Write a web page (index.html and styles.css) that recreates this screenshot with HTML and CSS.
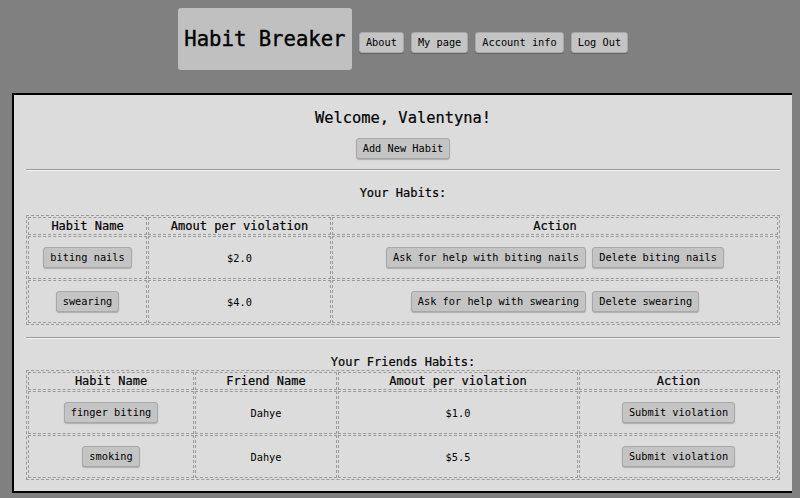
FILE: index.html
```html
<!DOCTYPE html>
<html lang="en">
<head>
<meta charset="utf-8">
<title>Habit Breaker</title>
<link rel="stylesheet" href="styles.css">
</head>
<body>
<header class="top">
  <div class="brand">Habit Breaker</div>
  <nav class="nav">
    <button class="btn">About</button>
    <button class="btn">My page</button>
    <button class="btn">Account info</button>
    <button class="btn">Log Out</button>
  </nav>
</header>
<main class="panel">
  <h2 class="welcome">Welcome, Valentyna!</h2>
  <div class="center"><button class="btn">Add New Habit</button></div>
  <hr class="rule rule-1">
  <h3 class="sect sect-1">Your Habits:</h3>
  <table class="grid">
    <thead>
      <tr><th class="w-119">Habit Name</th><th class="w-183">Amout per violation</th><th>Action</th></tr>
    </thead>
    <tbody>
      <tr>
        <td><button class="btn">biting nails</button></td>
        <td>$2.0</td>
        <td><button class="btn">Ask for help with biting nails</button> <button class="btn">Delete biting nails</button></td>
      </tr>
      <tr>
        <td><button class="btn">swearing</button></td>
        <td>$4.0</td>
        <td><button class="btn">Ask for help with swearing</button> <button class="btn">Delete swearing</button></td>
      </tr>
    </tbody>
  </table>
  <hr class="rule rule-2">
  <h3 class="sect sect-2">Your Friends Habits:</h3>
  <table class="grid">
    <thead>
      <tr><th class="w-166">Habit Name</th><th class="w-142">Friend Name</th><th class="w-240">Amout per violation</th><th>Action</th></tr>
    </thead>
    <tbody>
      <tr>
        <td><button class="btn">finger biting</button></td>
        <td>Dahye</td>
        <td>$1.0</td>
        <td><button class="btn">Submit violation</button></td>
      </tr>
      <tr>
        <td><button class="btn">smoking</button></td>
        <td>Dahye</td>
        <td>$5.5</td>
        <td><button class="btn">Submit violation</button></td>
      </tr>
    </tbody>
  </table>
</main>
</body>
</html>
```
FILE: styles.css
```css
* { box-sizing: border-box; }
html, body { margin: 0; padding: 0; }
body {
  background: #808080;
  margin: 8px;
  font-family: "DejaVu Sans Mono", "Liberation Mono", monospace;
  color: #000;
}
.top {
  display: flex;
  justify-content: center;
  align-items: baseline;
  gap: 7px;
  padding-left: 6px;
}
.brand {
  background: #c0c0c0;
  border-radius: 3px;
  width: 174px;
  height: 62px;
  line-height: 62px;
  font-size: 20.6px;
  text-align: center;
  white-space: nowrap;
  -webkit-text-stroke: 0.4px #000;
}
.nav {
  display: flex;
  gap: 7px;
  align-items: baseline;
}
.btn {
  font-family: "DejaVu Sans Mono", "Liberation Mono", monospace;
  font-size: 10.3px;
  line-height: 19px;
  height: 21px;
  padding: 0 6px;
  margin: 0;
  background: #c4c4c4;
  color: #000;
  border: 1px solid #a8a8a8;
  border-radius: 3px;
  box-shadow: 0 1px 1px rgba(0, 0, 0, 0.22);
  white-space: nowrap;
  vertical-align: middle;
}
.panel {
  display: block;
  margin: 23px 0 0 4px;
  width: 782px;
  background: #dcdcdc;
  border: 2px solid #000;
  padding: 13px 12px 11px 12px;
}
.welcome {
  margin: 0;
  font-size: 15.4px;
  line-height: 20px;
  font-weight: normal;
  text-align: center;
  -webkit-text-stroke: 0.2px #000;
}
.center {
  text-align: center;
  margin-top: 10px;
  height: 21px;
}
.rule {
  margin: 0;
  height: 2px;
  border: 0;
  border-top: 1px solid #9c9c9c;
  border-bottom: 1px solid #f2f2f2;
}
.rule-1 { margin-top: 10px; }
.rule-2 { margin-top: 12px; }
.sect {
  margin: 0;
  font-size: 12px;
  line-height: 16px;
  font-weight: normal;
  text-align: center;
  -webkit-text-stroke: 0.2px #000;
}
.sect-1 { margin: 14px 0 14px; }
.sect-2 { margin: 15px 0 0; }
.grid {
  width: 100%;
  border: 1px dashed #9a9a9a;
  border-spacing: 1px;
  border-collapse: separate;
}
.grid th {
  border: 1px dashed #9a9a9a;
  font-size: 12px;
  line-height: 16px;
  padding: 0 2px;
  font-weight: normal;
  -webkit-text-stroke: 0.2px #000;
  text-align: center;
}
.grid td {
  border: 1px dashed #9a9a9a;
  font-size: 10.3px;
  padding: 10px 2px;
  text-align: center;
  white-space: nowrap;
}
.w-119 { width: 119px; }
.w-183 { width: 183px; }
.w-166 { width: 166px; }
.w-142 { width: 142px; }
.w-240 { width: 240px; }
```
